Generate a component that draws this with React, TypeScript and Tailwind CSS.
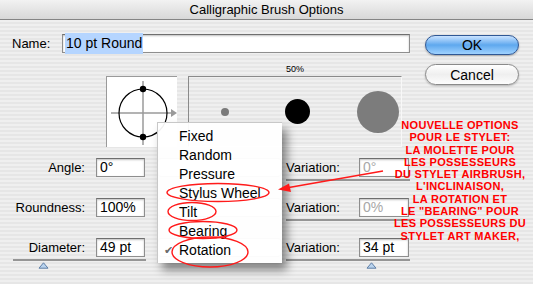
import React from "react";

const stripes =
  "bg-[repeating-linear-gradient(180deg,#efefef_0px,#efefef_2px,#e6e6e6_2px,#e6e6e6_4px)]";

const Field = ({
  value,
  width,
  disabled,
}: {
  value: string;
  width: string;
  disabled?: boolean;
}) => (
  <div
    className={`${width} h-[19px] bg-white border border-[#8e8e8e] border-t-[#6f6f6f] shadow-[inset_0_1px_2px_rgba(0,0,0,0.25)] flex items-center pl-[3px] text-[14px] ${
      disabled ? "text-[#a8a8a8]" : "text-black"
    }`}
  >
    {value}
  </div>
);

const Thumb = () => (
  <svg className="block" width="11" height="7" viewBox="0 0 11 7">
    <path d="M5.5 0.8 L10 6.2 L1 6.2 Z" fill="#b9d3ee" stroke="#5f7fa6" strokeWidth="1" />
  </svg>
);

interface IRow {
  label: string;
  value: string;
  variation: string;
  disabled?: boolean;
  slider?: boolean;
}

const Row = ({ label, value, variation, disabled, slider }: IRow) => (
  <div className="flex flex-col">
    <div className="flex items-center h-[19px]">
      <span className="w-[73px] text-right text-[13px]">{label}</span>
      <div className="ml-[11px]">
        <Field value={value} width="w-[49px]" />
      </div>
      {/* popup sitting behind the open menu */}
      <div className="ml-[12px] w-[125px] h-[19px] rounded-[4px] border border-[#b5b5b5] bg-[#f4f4f4]" />
      <span className="ml-[4px] w-[73px] text-[13px]">Variation:</span>
      <Field value={variation} width="w-[50px]" disabled={disabled} />
    </div>
    <div className="flex items-start h-[10px] mt-[2px]">
      <div className="w-[134px] shrink-0">
        {slider && (
          <>
            <div className="h-[2px] w-[133px] bg-[#959595] ml-[1px]" />
            <div className="ml-[26px] mt-[1px] leading-none">
              <Thumb />
            </div>
          </>
        )}
      </div>
      <div className="ml-[140px] w-[124px] shrink-0">
        <div className="h-[2px] w-[124px] bg-[#959595]" />
        {slider && (
          <div className="ml-[80px] mt-[1px] leading-none">
            <Thumb />
          </div>
        )}
      </div>
    </div>
  </div>
);

const menuItems = ["Fixed", "Random", "Pressure", "Stylus Wheel", "Tilt", "Bearing", "Rotation"];

const notes = [
  "NOUVELLE OPTIONS",
  "POUR LE STYLET:",
  "LA MOLETTE POUR",
  "LES POSSESSEURS",
  "DU STYLET AIRBRUSH,",
  "L'INCLINAISON,",
  "LA ROTATION ET",
  'LE "BEARING" POUR',
  "LES POSSESSEURS DU",
  "STYLET ART MAKER,",
];

const App = () => {
  return (
    <div
      className={`relative w-[533px] h-[284px] overflow-hidden ${stripes} text-black font-['Liberation_Sans',Arial,sans-serif]`}
    >
      <div className="h-[20px] border-b border-[#858585] bg-gradient-to-b from-[#f2f2f2] to-[#d8d8d8] flex items-center justify-center text-[13px]">
        Calligraphic Brush Options
      </div>

      <div className="flex pt-[14px]">
        <div className="w-[425px] pl-[12px]">
          <div className="flex items-center h-[19px]">
            <span className="w-[50px] text-[13px]">Name:</span>
            <div className="w-[348px] h-[19px] bg-white border border-[#8e8e8e] border-t-[#6f6f6f] shadow-[inset_0_1px_2px_rgba(0,0,0,0.25)] flex items-center pl-[2px] text-[14px]">
              <span className="bg-[#b5d5ff] px-[1px]">10 pt Round</span>
            </div>
          </div>

          <div className="flex items-end mt-[10px]">
            <div className="ml-[94px] w-[71px] h-[71px] bg-white border-l border-t border-[#9a9a9a]">
              <svg width="71" height="71" viewBox="0 0 71 71">
                <line x1="4" y1="36" x2="66" y2="36" stroke="#9a9a9a" strokeWidth="1.5" />
                <path d="M64 32 L70 36 L64 40 Z" fill="#9a9a9a" />
                <line x1="36" y1="4" x2="36" y2="68" stroke="#9a9a9a" strokeWidth="1.5" />
                <circle cx="36" cy="36" r="24" fill="none" stroke="#000" strokeWidth="1.2" />
                <circle cx="36" cy="12" r="3.2" fill="#000" />
                <circle cx="36" cy="60" r="3.2" fill="#000" />
              </svg>
            </div>
            <div className="ml-[11px] flex flex-col items-center">
              <span className="text-[9px] leading-[13px]">50%</span>
              <div className="w-[214px] h-[71px] border-l border-t border-[#8a8a8a] border-r border-r-[#f8f8f8] border-b border-b-[#f8f8f8] flex items-center">
                <div className="ml-[32px] w-[8px] h-[8px] rounded-full bg-[#7a7a7a]" />
                <div className="ml-[56px] w-[25px] h-[25px] rounded-full bg-black" />
                <div className="ml-[47px] w-[42px] h-[42px] rounded-full bg-[#7c7c7c]" />
              </div>
            </div>
          </div>

          <div className="flex flex-col gap-[9px] mt-[11px]">
            <Row label="Angle:" value="0°" variation="0°" disabled />
            <Row label="Roundness:" value="100%" variation="0%" disabled />
            <Row label="Diameter:" value="49 pt" variation="34 pt" slider />
          </div>
        </div>

        <div className="w-[94px] flex flex-col gap-[9px] pt-[1px]">
          <button className="h-[20px] rounded-full border border-[#2f5794] bg-gradient-to-b from-[#c9e3ff] via-[#5ea8ee] to-[#9fd2ff] text-[14px] leading-none shadow-[0_1px_2px_rgba(0,0,0,0.3)]">
            OK
          </button>
          <button className="h-[21px] rounded-full border border-[#8a8a8a] bg-gradient-to-b from-white via-[#efefef] to-[#fdfdfd] text-[14px] leading-none shadow-[0_1px_2px_rgba(0,0,0,0.25)]">
            Cancel
          </button>
        </div>
      </div>

      {/* open popup menu */}
      <div className="absolute left-[157px] top-[122px] w-[125px] h-[141px] bg-[rgba(255,255,255,0.94)] border-l border-t border-[#c8c8c8] shadow-[5px_7px_9px_rgba(0,0,0,0.45)] pt-[4px]">
        {menuItems.map((item) => (
          <div key={item} className="relative h-[19px] flex items-center pl-[21px] text-[14px]">
            {item === "Rotation" && (
              <span className="absolute left-[6px] text-[11px] text-[#6a6a6a]">✔</span>
            )}
            {item}
          </div>
        ))}
      </div>

      {/* annotations */}
      <svg className="absolute left-0 top-0" width="533" height="284" viewBox="0 0 533 284">
        <g fill="none" stroke="#ff1a1a" strokeWidth="1.4">
          <ellipse cx="218" cy="192.5" rx="51" ry="9" />
          <ellipse cx="192" cy="211.5" rx="24" ry="9" />
          <ellipse cx="203" cy="230" rx="34" ry="8.5" />
          <ellipse cx="210" cy="252" rx="38" ry="15" />
          <line x1="383" y1="171" x2="286" y2="188" strokeWidth="1.6" />
        </g>
        <path d="M278 189.5 L289 183.5 L291 192 Z" fill="#ff1a1a" />
      </svg>
      <div className="absolute left-[393px] top-[119px] w-[134px] text-center text-[11px] leading-[12.3px] font-bold tracking-[0.3px] text-[#ff0000]">
        {notes.map((n) => (
          <div key={n}>{n}</div>
        ))}
      </div>
    </div>
  );
};

export default App;
